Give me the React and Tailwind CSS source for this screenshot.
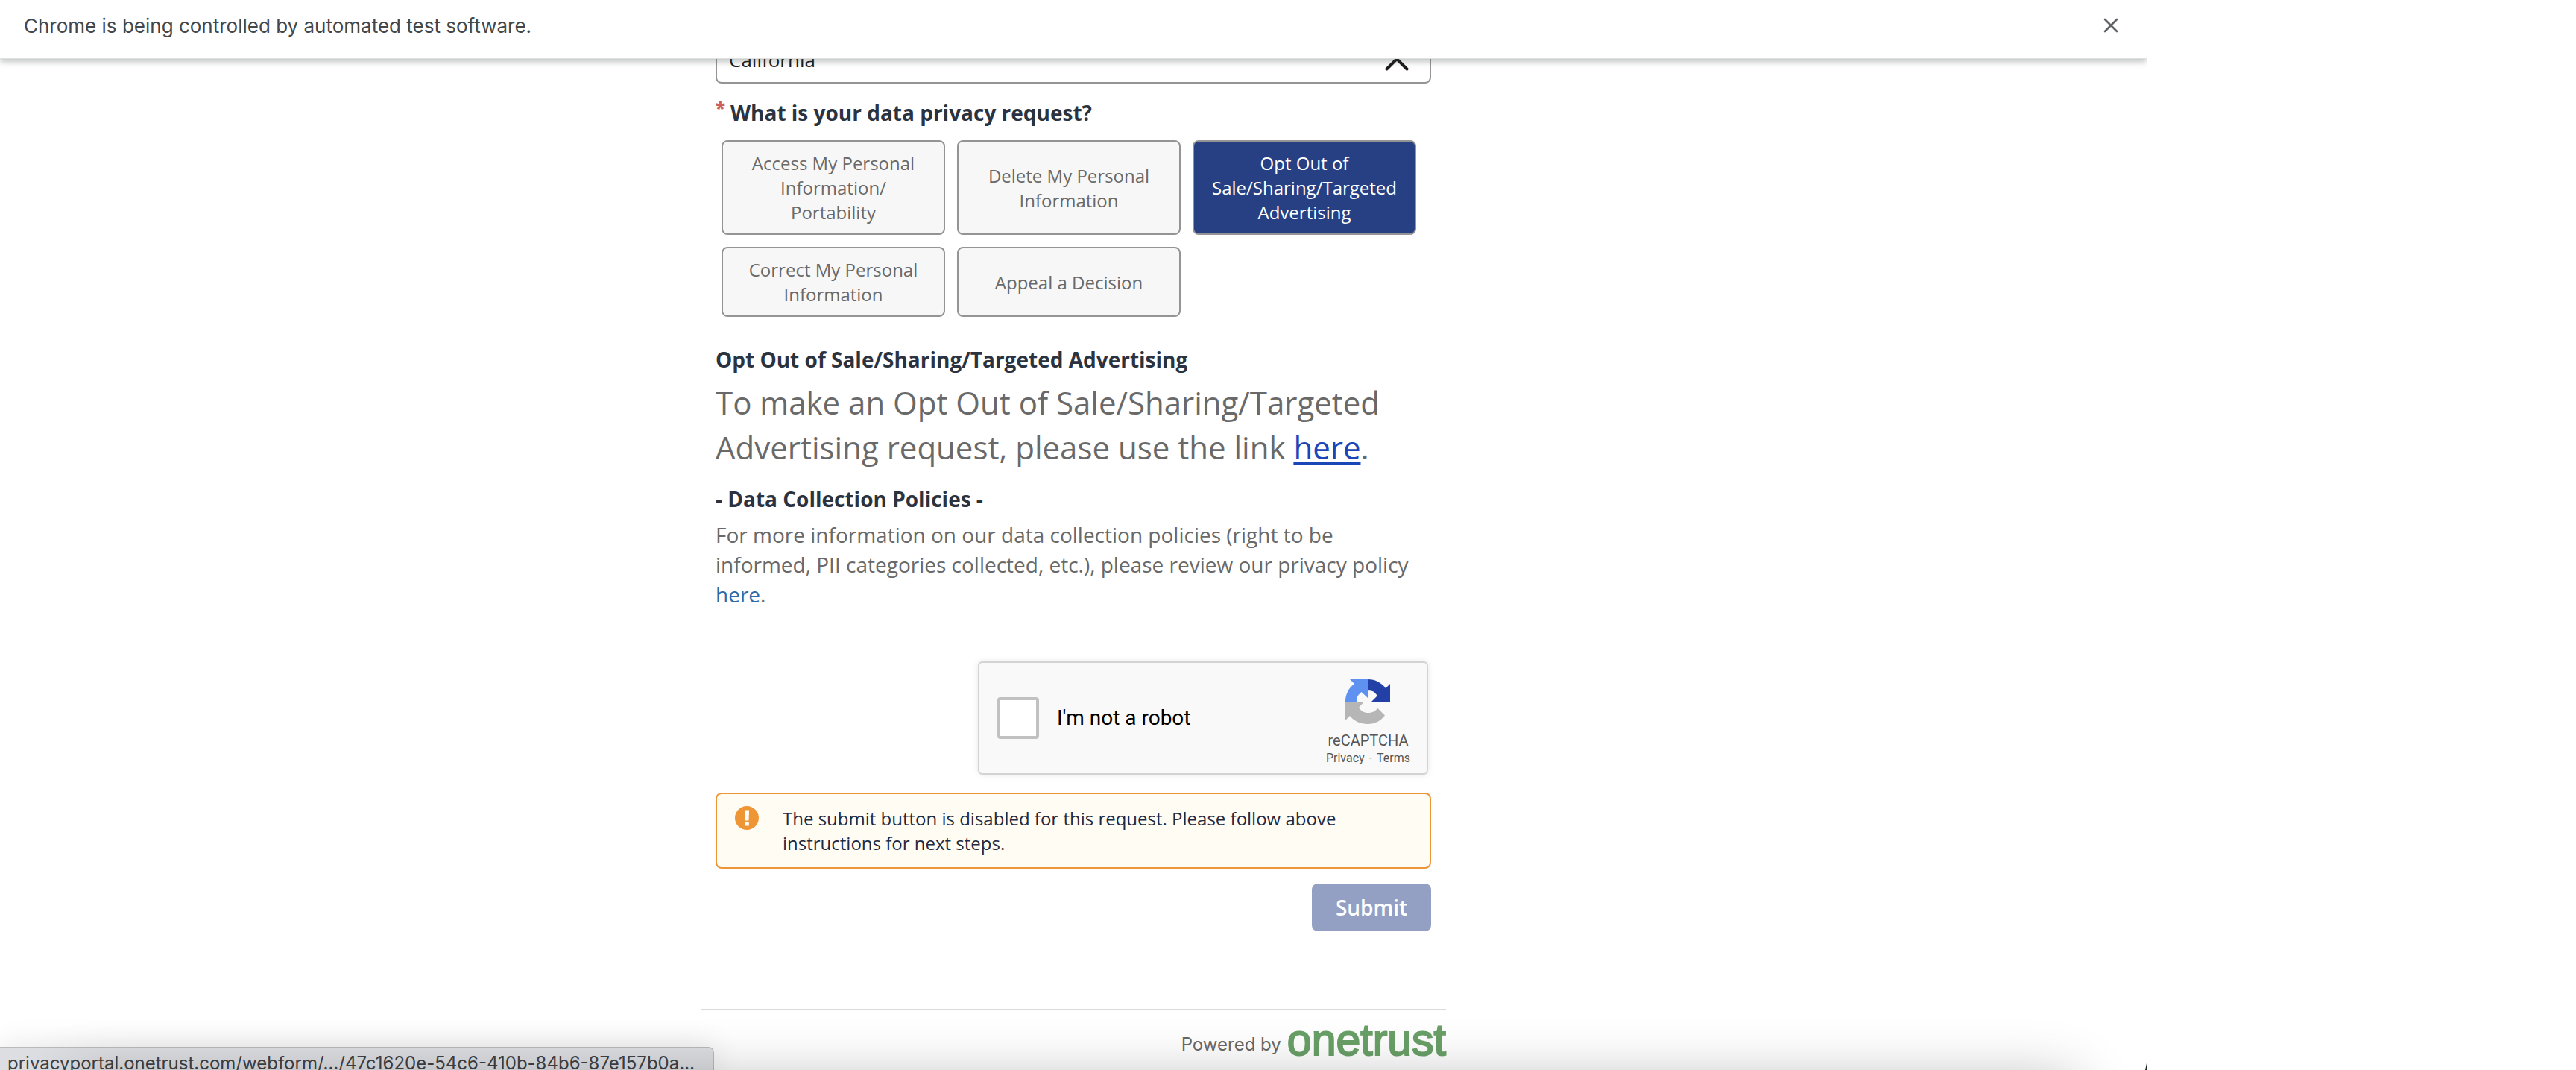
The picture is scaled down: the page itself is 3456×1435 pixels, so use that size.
import React from 'react';

const REQUEST_TYPES = [
  'Access My Personal Information/ Portability',
  'Delete My Personal Information',
  'Opt Out of Sale/Sharing/Targeted Advertising',
  'Correct My Personal Information',
  'Appeal a Decision',
];

function InfoBar() {
  return (
    <div
      role="status"
      className="relative z-10 flex h-[79px] shrink-0 items-start justify-between border-b border-[#dfe0df] bg-white pl-8 pr-8 pt-[17px] font-['Inter',sans-serif] text-[#44474a] shadow-[0_4px_8px_rgba(60,75,65,0.32)]"
    >
      <p className="text-[26px] leading-9">Chrome is being controlled by automated test software.</p>
      <button type="button" aria-label="Close" className="flex size-8 items-center justify-center pt-0.5 text-[#5f6368]">
        <svg viewBox="0 0 20 20" className="size-5" fill="none" stroke="currentColor" strokeWidth="2.6" strokeLinecap="round">
          <path d="M2 2 18 18M18 2 2 18" />
        </svg>
      </button>
    </div>
  );
}

function StateSelect() {
  return (
    <div className="relative">
      <label htmlFor="state" className="sr-only">State</label>
      <select
        id="state"
        defaultValue="California"
        className="block h-20 w-full appearance-none rounded-lg border-2 border-[#949494] bg-white pb-2 pl-4 pr-20 pt-6 text-[26px] text-[#1b1b1b]"
      >
        <option>California</option>
      </select>
      <svg viewBox="0 0 32 18" className="pointer-events-none absolute right-[30px] top-[45px] h-[18px] w-8" fill="none" stroke="#1b1b1b" strokeWidth="4" strokeLinecap="round">
        <path d="M2.500 15.500 16 2 29.500 15.500" />
      </svg>
    </div>
  );
}

function RequestPicker() {
  return (
    <fieldset className="mt-[19px]">
      <legend className="flex items-start text-[28px] font-bold leading-10 text-[#2b3341]">
        <span className="w-5 text-2xl font-extrabold leading-7 text-[#cf5f5b]">*</span>
        What is your data privacy request?
      </legend>
      <div className="mt-[17px] grid grid-cols-3 gap-4 pl-2 pr-5">
        {REQUEST_TYPES.map((label, i) => (
          <button
            key={label}
            type="button"
            aria-pressed={i === 2}
            className="rounded-lg border-2 border-[#949494] bg-[#f7f7f7] px-5 py-3 text-2xl leading-[33px] text-[#696969] aria-pressed:bg-[#264083] aria-pressed:text-white"
          >
            {label}
          </button>
        ))}
      </div>
    </fieldset>
  );
}

function RecaptchaLogo() {
  return (
    <svg viewBox="0 0 60 60" className="size-[60px]" aria-hidden="true">
      <path d="M60 30V6l-6 6C48.5 4.500 40 0 30 0v15c4.500 0 7.500 1 9 2.500L43 22l-8 8z" fill="#2340a6" />
      <path d="M30 0H6l6 6C4.500 11.500 0 20 0 30h15c0-4.500 1-7.500 2.500-9l4-4L30 25z" fill="#5e91f0" />
      <path d="M0 30v25l6-6c5.500 7 14 11 24 11 10 0 17.500-4.500 23-11.500L43 38.500c-2 4-6 6.500-13 6.500-5 0-9-2.500-12-7l7-8z" fill="#b6b6b6" />
    </svg>
  );
}

function Recaptcha() {
  return (
    <div className="mr-1 mt-[70px] flex h-[152px] w-[604px] max-w-full items-center self-end rounded-md border-2 border-[#d3d3d3] bg-[#f9f9f9] pl-6 pr-[22px] font-['Roboto',sans-serif] shadow-[0_0_8px_rgba(0,0,0,0.1)]">
      <input
        id="robot"
        type="checkbox"
        className="size-14 shrink-0 appearance-none rounded border-4 border-[#c1c1c1] bg-white"
      />
      <label htmlFor="robot" className="grow pl-6 text-[28px] leading-8 text-black">I'm not a robot</label>
      <div className="flex flex-col items-center pt-3 text-[#555]">
        <RecaptchaLogo />
        <p className="mt-2 text-xl leading-7">reCAPTCHA</p>
        <p className="flex gap-1.5 text-base leading-5">
          <a href="#privacy">Privacy</a>
          <span>-</span>
          <a href="#terms">Terms</a>
        </p>
      </div>
    </div>
  );
}

function DisabledNotice() {
  return (
    <div role="alert" className="mt-6 flex items-start gap-8 rounded-lg border-2 border-[#ed9637] bg-[#fffcf4] px-6 py-4 text-2xl leading-[33px] text-[#1e2942]">
      <svg viewBox="0 0 32 32" className="size-8 shrink-0" aria-hidden="true">
        <circle cx="16" cy="16" r="16" fill="#ee9536" />
        <path d="M13 5.500h6l-.5 14h-5zM13.200 21.500h5.600v5h-5.600z" fill="#fff" />
      </svg>
      <p>The submit button is disabled for this request. Please follow above instructions for next steps.</p>
    </div>
  );
}

function Footer() {
  return (
    <footer className="-mx-5 mt-[104px] flex items-center justify-end gap-2 border-t-2 border-[#dadada]">
      <span className="pt-3 font-['Inter',sans-serif] text-2xl text-[#696969]">Powered by</span>
      <a href="#onetrust" className="font-['Liberation_Sans',sans-serif] text-[59px] leading-[80px] text-[#69a067] [-webkit-text-stroke:2px_#69a067]">onetrust</a>
    </footer>
  );
}

export default function App() {
  return (
    <div className="h-screen overflow-hidden bg-white">
      <div className="relative flex h-full w-5/6 flex-col overflow-hidden font-['Open_Sans',sans-serif]">
        <InfoBar />
        <main className="mx-auto -mt-[47px] w-full max-w-[960px]">
          <form className="flex flex-col">
            <StateSelect />
            <RequestPicker />
            <section className="mt-[37px] text-[#696969]">
              <h2 className="text-[28px] font-bold leading-10 text-[#2b3341]">Opt Out of Sale/Sharing/Targeted Advertising</h2>
              <p className="mt-2 text-[42px] leading-[60px]">
                To make an Opt Out of Sale/Sharing/Targeted Advertising request, please use the link{' '}
                <a href="#opt-out" className="text-[#1a46b8] underline decoration-[4px] underline-offset-4">here</a>.
              </p>
              <h2 className="mt-[19px] text-[28px] font-bold leading-10 text-[#2b3341]">- Data Collection Policies -</h2>
              <p className="mt-2 text-[28px] leading-10">
                For more information on our data collection policies (right to be informed, PII categories collected, etc.), please review our privacy policy{' '}
                <a href="#policy" className="text-[#2f6ba8]">here</a>.
              </p>
            </section>
            <Recaptcha />
            <DisabledNotice />
            <button type="submit" disabled className="mt-5 h-16 w-40 self-end rounded-lg bg-[#93a0c3] text-[28px] font-semibold text-white">
              Submit
            </button>
          </form>
          <Footer />
        </main>

        <div className="absolute bottom-0 left-0 h-[31px] w-[958px] rounded-tr-lg border-r border-t border-[#b9bbba] bg-[#dddee2] pl-[10px] font-['Inter',sans-serif] text-2xl leading-[42px] text-[#3f4144] shadow-[0_0_40px_rgba(0,0,0,0.12)]">
          <span className="whitespace-nowrap">privacyportal.onetrust.com/webform/…/47c1620e-54c6-410b-84b6-87e157b0a…</span>
        </div>
        <div className="pointer-events-none absolute inset-x-24 -bottom-24 h-20 shadow-[0_0_80px_rgba(0,0,0,0.3)]" />
        <svg viewBox="0 0 2 9" className="absolute bottom-0 right-0 h-[9px] w-0.5" aria-hidden="true">
          <path d="M2 0V9H0Z" fill="#1b2b20" />
        </svg>
      </div>
    </div>
  );
}
